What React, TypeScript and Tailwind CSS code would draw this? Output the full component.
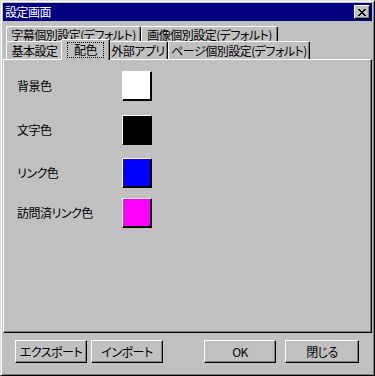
const font = "font-['Noto_Sans_CJK_JP','Liberation_Sans',sans-serif] [font-feature-settings:'palt'] tracking-[-0.5px]";

const raised =
  "border border-t-white border-l-white border-r-black border-b-black shadow-[inset_-1px_-1px_0_#808080]";

const Tab = ({
  label,
  width,
  selected = false,
}: {
  label: string;
  width: string;
  selected?: boolean;
}) => {
  if (selected) {
    return (
      <div
        className={`${width} relative z-10 -mb-px -mx-[2px] flex h-[21px] items-start justify-center whitespace-nowrap rounded-t-[2px] border-l border-t border-r border-l-white border-t-white border-r-black bg-[#c0c0c0] pt-[2px] shadow-[inset_-1px_0_0_#808080]`}
      >
        <span className="border border-dotted border-black px-[6px] leading-[14px]">
          {label}
        </span>
      </div>
    );
  }
  return (
    <div
      className={`${width} flex h-full items-center justify-center whitespace-nowrap rounded-t-[2px] border-l border-t border-r border-l-white border-t-white border-r-black bg-[#c0c0c0] pt-px leading-[14px] shadow-[inset_-1px_0_0_#808080]`}
    >
      {label}
    </div>
  );
};

const ColorRow = ({
  label,
  color,
  className,
}: {
  label: string;
  color: string;
  className: string;
}) => (
  <div className={`flex items-center ${className}`}>
    <div className="w-[118px] pl-[13px]">{label}</div>
    <div
      className={`h-[30px] w-[30px] border border-t-white border-l-white border-r-black border-b-black shadow-[inset_-1px_-1px_0_#000] ${color}`}
    />
  </div>
);

const Button = ({ label, width }: { label: string; width: string }) => (
  <button className={`${width} ${raised} h-[23px] bg-[#c0c0c0] text-[12px] text-black`}>
    {label}
  </button>
);

export default function App() {
  return (
    <div
      className={`${font} flex h-[376px] w-[375px] flex-col border border-t-[#dfdfdf] border-l-[#dfdfdf] border-r-black border-b-black bg-[#c0c0c0] p-[2px] text-[12px] text-black shadow-[inset_1px_1px_0_#fff,inset_-1px_-1px_0_#808080]`}
    >
      {/* title bar */}
      <div className="flex h-[18px] items-center justify-between bg-[#000080] pl-[2px] pr-[2px]">
        <span className="text-white leading-none">設定画面</span>
        <button
          className={`${raised} flex h-[14px] w-[16px] items-center justify-center bg-[#c0c0c0]`}
        >
          <svg width="8" height="7" viewBox="0 0 8 7" shapeRendering="crispEdges">
            <path
              d="M0 0h2v1H0zM6 0h2v1H6zM1 1h2v1H1zM5 1h2v1H5zM2 2h4v1H2zM3 3h2v1H3zM2 4h4v1H2zM1 5h2v1H1zM5 5h2v1H5zM0 6h2v1H0zM6 6h2v1H6z"
              fill="#000"
            />
          </svg>
        </button>
      </div>

      {/* tabs */}
      <div className="mt-[5px] ml-[3px] flex h-[15px]">
        <Tab label="字幕個別設定(デフォルト)" width="w-[135px]" />
        <Tab label="画像個別設定(デフォルト)" width="w-[137px]" />
      </div>
      <div className="ml-[3px] flex h-[18px] items-end">
        <Tab label="基本設定" width="w-[57px]" />
        <Tab label="配色" width="w-[49px]" selected />
        <Tab label="外部アプリ" width="w-[60px]" />
        <Tab label="ページ個別設定(デフォルト)" width="w-[142px]" />
      </div>

      {/* panel */}
      <div className="h-[274px] border border-t-white border-l-white border-r-black border-b-black shadow-[inset_-1px_-1px_0_#808080]">
        <ColorRow label="背景色" color="bg-white" className="mt-[11px]" />
        <ColorRow label="文字色" color="bg-black" className="mt-[14px]" />
        <ColorRow label="リンク色" color="bg-[#0000ff]" className="mt-[13px]" />
        <ColorRow label="訪問済リンク色" color="bg-[#ff00ff]" className="mt-[10px]" />
      </div>

      {/* buttons */}
      <div className="mt-[7px] flex pl-[12px]">
        <Button label="エクスポート" width="w-[72px]" />
        <div className="ml-[4px]">
          <Button label="インポート" width="w-[72px]" />
        </div>
        <div className="ml-[41px]">
          <Button label="OK" width="w-[72px]" />
        </div>
        <div className="ml-[9px]">
          <Button label="閉じる" width="w-[74px]" />
        </div>
      </div>
    </div>
  );
}
